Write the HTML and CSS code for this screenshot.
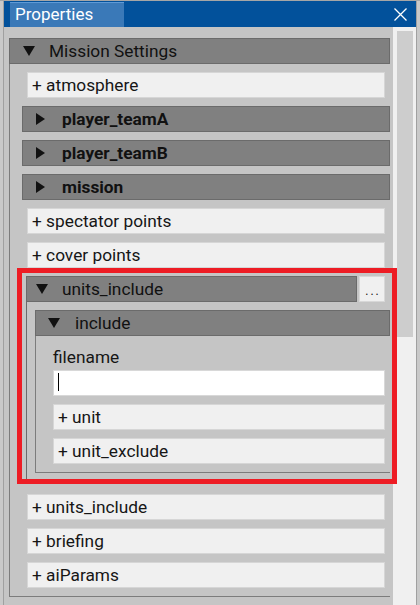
FILE: index.html
```html
<!DOCTYPE html>
<html>
<head>
<meta charset="utf-8">
<title>Properties</title>
<link rel="stylesheet" href="styles.css">
</head>
<body>
<div class="window">
  <div class="titlebar">
    <div class="tab">Properties</div>
    <svg class="close" width="13" height="13" viewBox="0 0 13 13"><path d="M0.5 0.5L12.5 12.5M12.5 0.5L0.5 12.5" stroke="#ffffff" stroke-width="1.3" fill="none"/></svg>
  </div>
  <div class="main">
    <div class="viewport">
      <div class="group root">
        <div class="header">
          <span class="tri"><svg width="12" height="10" viewBox="0 0 12 10"><polygon points="0,0 12,0 6,10" fill="#111"/></svg></span>
          <span>Mission Settings</span>
        </div>
        <div class="content">
          <div class="prop">+ atmosphere</div>
          <div class="header sub">
            <span class="tri"><svg width="9" height="12" viewBox="0 0 9 12"><polygon points="0,0 9,6 0,12" fill="#111"/></svg></span>
            <span>player_teamA</span>
          </div>
          <div class="header sub">
            <span class="tri"><svg width="9" height="12" viewBox="0 0 9 12"><polygon points="0,0 9,6 0,12" fill="#111"/></svg></span>
            <span>player_teamB</span>
          </div>
          <div class="header sub">
            <span class="tri"><svg width="9" height="12" viewBox="0 0 9 12"><polygon points="0,0 9,6 0,12" fill="#111"/></svg></span>
            <span>mission</span>
          </div>
          <div class="prop">+ spectator points</div>
          <div class="prop">+ cover points</div>
          <div class="arr">
            <div class="arr-head">
              <div class="header arr-title">
                <span class="tri"><svg width="12" height="10" viewBox="0 0 12 10"><polygon points="0,0 12,0 6,10" fill="#111"/></svg></span>
                <span>units_include</span>
              </div>
              <div class="more">...</div>
            </div>
            <div class="arr-content">
              <div class="inc">
                <div class="header inc-title">
                  <span class="tri"><svg width="12" height="10" viewBox="0 0 12 10"><polygon points="0,0 12,0 6,10" fill="#111"/></svg></span>
                  <span>include</span>
                </div>
                <div class="inc-content">
                  <div class="field">
                    <div class="label">filename</div>
                    <div class="input"><span class="caret"></span></div>
                  </div>
                  <div class="prop">+ unit</div>
                  <div class="prop">+ unit_exclude</div>
                </div>
              </div>
            </div>
          </div>
          <div class="prop">+ units_include</div>
          <div class="prop">+ briefing</div>
          <div class="prop">+ aiParams</div>
        </div>
      </div>
    </div>
    <div class="scrollbar"><div class="thumb"></div></div>
    <div class="highlight"></div>
  </div>
</div>
</body>
</html>
```

FILE: styles.css
```css
html {
  background: #c9c9c9;
}

body {
  margin: 0;
  border-top: 1px solid #a6a6a6;
  font-family: Roboto, "Noto Sans", "Liberation Sans", sans-serif;
  font-size: 17.3px;
  color: #161616;
}

.window {
  margin-left: 3px;
  width: 414px;
  height: 604px;
  box-sizing: border-box;
  border-left: 1px solid #a0a0a0;
  border-right: 1px solid #a0a0a0;
  display: flex;
  flex-direction: column;
  overflow: hidden;
}

.titlebar {
  height: 26px;
  flex: none;
  background: #02519b;
  display: flex;
  align-items: flex-start;
  padding-top: 1px;
  box-sizing: border-box;
}

.tab {
  margin-left: 6px;
  width: 114px;
  height: 25px;
  box-sizing: border-box;
  background: #3a79b8;
  border-top: 1px solid #5f9ad6;
  color: #ffffff;
  font-size: 17px;
  line-height: 23px;
  padding-left: 5px;
}

.close {
  margin-left: auto;
  margin-right: 9px;
  margin-top: 6px;
  display: block;
}

.main {
  position: relative;
  flex: 1;
  display: flex;
  background: #c5c5c5;
  min-height: 0;
}

.viewport {
  flex: 1;
  padding: 11px 0 0 5px;
  overflow: hidden;
}

.root {
  width: 381px;
}

.header {
  height: 26px;
  box-sizing: border-box;
  background: #808080;
  border: 1px solid #6b6b6b;
  display: flex;
  align-items: center;
  padding-left: 13px;
  line-height: 24px;
  color: #111111;
}

.tri {
  width: 26px;
  display: flex;
  align-items: center;
}

.tri svg {
  display: block;
}

.sub {
  font-weight: bold;
}

.content {
  border-left: 1px solid #7c7c7c;
  border-bottom: 1px solid #7c7c7c;
  padding: 8px 0 8px 12px;
  display: flex;
  flex-direction: column;
  gap: 8px;
}

.prop {
  height: 26px;
  box-sizing: border-box;
  margin: 0 5px;
  background: #f0f0f0;
  border: 1px solid #d6d6d6;
  padding-left: 4px;
  line-height: 24px;
  color: #161616;
  white-space: nowrap;
}

.arr {
  margin-left: 4px;
  margin-bottom: 5px;
}

.arr-head {
  display: flex;
}

.arr-title {
  flex: 1;
  padding-left: 9px;
}

.more {
  width: 26px;
  height: 26px;
  box-sizing: border-box;
  margin: 0 5px 0 2px;
  background: #f0f0f0;
  border: 1px solid #d8d8d8;
  font-size: 12px;
  line-height: 28px;
  text-align: center;
  letter-spacing: 2px;
  padding-left: 2px;
  color: #111;
}

.arr-content {
  border-left: 1px solid #6b6b6b;
  border-bottom: 1px solid #6b6b6b;
  padding: 8px 0 7px 8px;
}

.inc-title {
  padding-left: 12px;
}

.inc-title .tri {
  width: 27px;
}

.inc-content {
  border-left: 1px solid #7c7c7c;
  border-bottom: 1px solid #7c7c7c;
  padding: 8px 5px 8px 17px;
  display: flex;
  flex-direction: column;
  gap: 8px;
}

.inc-content .prop {
  margin: 0;
}

.label {
  height: 26px;
  line-height: 26px;
  color: #161616;
}

.input {
  height: 26px;
  box-sizing: border-box;
  background: #ffffff;
  border: 1px solid #d8d8d8;
  padding: 2px 0 0 4px;
}

.caret {
  display: block;
  width: 1px;
  height: 18px;
  background: #000000;
}

.scrollbar {
  width: 23px;
  flex: none;
  background: #f0f0f0;
}

.thumb {
  margin: 4px 0 0 4px;
  width: 16px;
  height: 306px;
  background: #cdcdcd;
}

.highlight {
  position: absolute;
  left: 13px;
  top: 241px;
  width: 380px;
  height: 216px;
  box-sizing: border-box;
  border: 5px solid #ed1c24;
}
```
